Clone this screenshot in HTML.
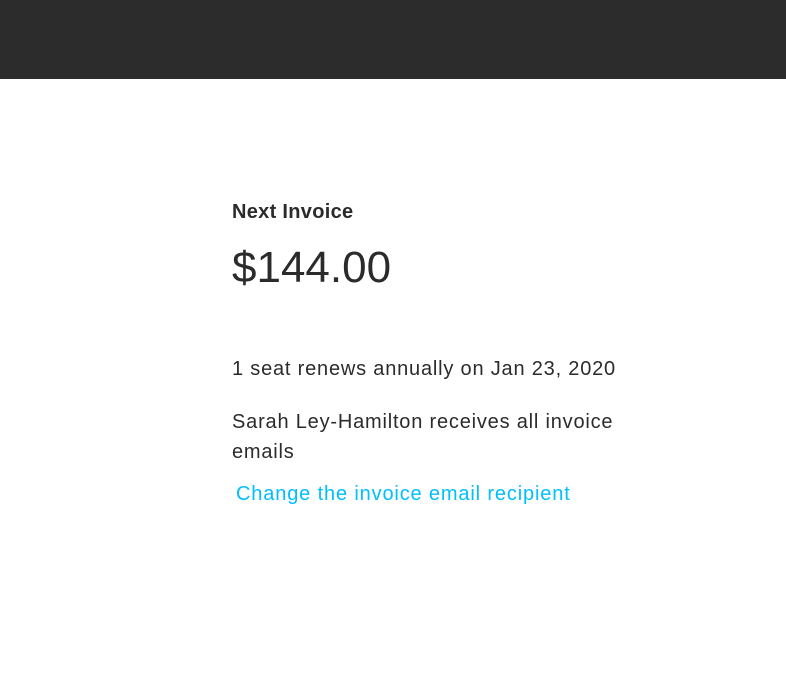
<!DOCTYPE html>
<html><head><meta charset="utf-8"><style>
html,body{margin:0;padding:0;width:786px;height:685px;background:#fff;overflow:hidden;font-family:"Liberation Sans",sans-serif;color:#2b2b2b}
.top{height:79px;background:#2c2c2c}
.c{position:absolute;left:232px}
</style></head><body>
<div class="top"></div>
<div class="c" style="top:201px;font-size:20px;font-weight:bold;letter-spacing:0.3px">Next Invoice</div>
<div class="c" style="top:243px;font-size:44px;letter-spacing:0px">$144.00</div>
<div class="c" style="top:358px;font-size:20px;letter-spacing:0.8px">1 seat renews annually on Jan 23, 2020</div>
<div class="c" style="top:407px;font-size:20px;line-height:30px;width:400px;letter-spacing:0.8px">Sarah Ley-Hamilton receives all invoice emails</div>
<div class="c" style="top:483px;left:236px;font-size:20px;color:#00bfff;letter-spacing:0.85px">Change the invoice email recipient</div>
</body></html>
